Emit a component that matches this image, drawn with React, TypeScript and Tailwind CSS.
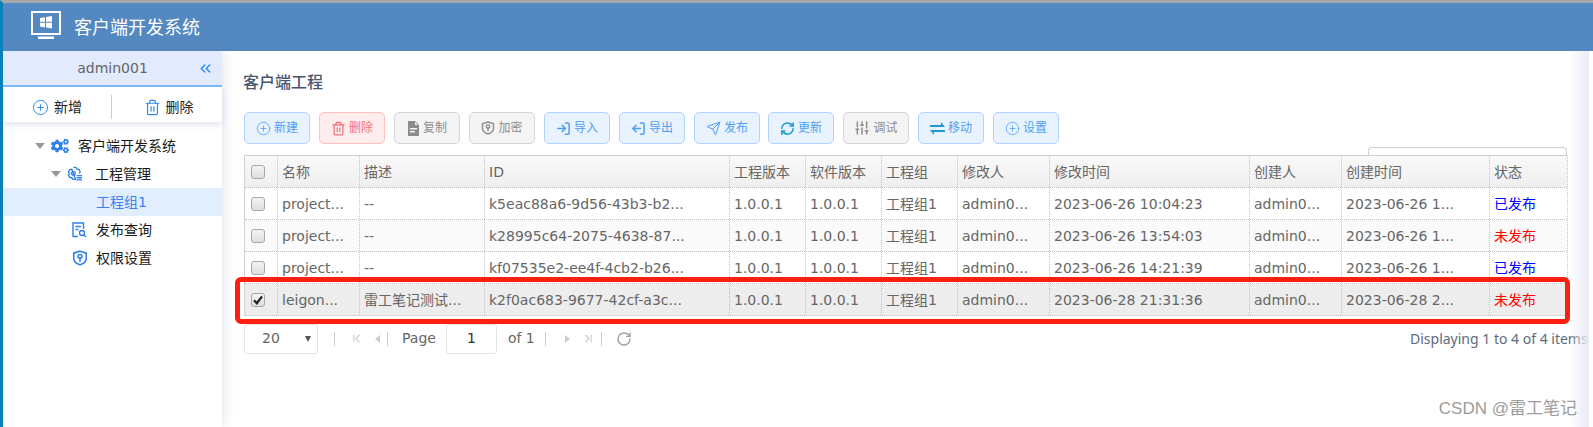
import type { ReactNode } from 'react';
import {
  ChevronsLeft,
  ChevronFirst,
  ChevronLast,
  CirclePlus,
  LogIn,
  LogOut,
  RefreshCw,
  RotateCw,
  Send,
  SlidersVertical,
  Trash2,
} from 'lucide-react';
import { FaCogs } from 'react-icons/fa';

const UI_FONT = "font-['DejaVu_Sans','Noto_Sans_CJK_SC',sans-serif]";

type Tone = 'blue' | 'red' | 'gray';

const toneClass: Record<Tone, string> = {
  blue: 'bg-[#e9f3ff] border-[#aed4ff] text-[#4d9ff5]',
  red: 'bg-[#ffecec] border-[#ffc0c0] text-[#f4717a]',
  gray: 'bg-[#f4f4f4] border-[#d6d6d6] text-[#8c8c8c]',
};

function MonitorLogo() {
  return (
    <svg width="31" height="28" viewBox="0 0 31 28" className="-mt-[4px] shrink-0">
      <rect x="1" y="1" width="28" height="22" fill="none" stroke="#fff" strokeWidth="2" />
      <path d="M9 7l5-.8v4.600H9zM15 6l6-.9v5.700h-6zM9 11.800h5v4.600l-5-.8zM15 11.800h6v5.700l-6-.9z" fill="#fff" />
      <rect x="7" y="25.500" width="16" height="2.500" fill="#fff" />
    </svg>
  );
}

function CopyIcon() {
  return (
    <svg width="13" height="15" viewBox="0 0 13 15" fill="#8c8c8c">
      <path d="M1 0h7l4 4v11H1zM3 7v1.500h7V7zM3 10v1.500h5V10zM8 1v3h3z" fillRule="evenodd" />
    </svg>
  );
}

function ShieldKey({ size = 14, color = '#8c8c8c' }: { size?: number; color?: string }) {
  return (
    <svg width={size} height={size} viewBox="0 0 14 14" fill="none" stroke={color} strokeWidth="1.400">
      <path d="M7 1l5.500 1.800v4.400c0 3-2.500 4.800-5.500 5.800-3-1-5.500-2.800-5.500-5.800V2.800z" />
      <circle cx="7" cy="5.600" r="1.700" />
      <path d="M7 7.300v3" />
    </svg>
  );
}

function SwapIcon() {
  return (
    <svg width="15" height="13" viewBox="0 0 15 13" fill="#1b9ad6">
      <path d="M0 3h11V0l4 5H0zM15 8H0l4 5v-3h11z" />
    </svg>
  );
}

function ProjectGear() {
  return (
    <svg width="16" height="16" viewBox="0 0 15 15" fill="none" stroke="#2f80ed" strokeWidth="1.300">
      <path d="M6 1l2.500.5 1 1.500 2 .3.800 2.200-.8 1.500M8 12.500H5.500l-1-1.500-2-.3L1.300 8.500l1-1.500-1-1.500 1.200-2.200 2-.3z" />
      <circle cx="6" cy="7" r="1.700" />
      <path d="M9 9h5M9 11h5M9 13h5" />
    </svg>
  );
}

function FileQuery() {
  return (
    <svg width="15" height="16" viewBox="0 0 15 16" fill="none" stroke="#2f80ed" strokeWidth="1.400">
      <path d="M6 14.500H1V1h10.500v6" />
      <path d="M3.500 4.500h5.500M3.500 7.500h3" />
      <circle cx="10" cy="11" r="2.500" />
      <path d="M12 13l2 2" />
    </svg>
  );
}

function ToolButton({
  tone,
  icon,
  label,
  className = '',
}: {
  tone: Tone;
  icon: ReactNode;
  label: string;
  className?: string;
}) {
  return (
    <div
      className={`flex h-[32px] w-[66px] items-center justify-center gap-[3px] rounded-[5px] border text-[12px] ${toneClass[tone]} ${className}`}
    >
      {icon}
      <span>{label}</span>
    </div>
  );
}

function TreeRow({
  indent,
  iconWidth = 'w-[24px]',
  caret,
  icon,
  label,
  active,
}: {
  indent: string;
  iconWidth?: string;
  caret?: boolean;
  icon?: ReactNode;
  label: string;
  active?: boolean;
}) {
  return (
    <div
      className={`flex h-[28px] items-center text-[14px] ${indent} ${active ? 'bg-[#e1eeff] text-[#3f7ff0]' : 'text-[#1a1a1a]'}`}
    >
      <span className="flex w-[16px] shrink-0 items-center">
        {caret && <span className="h-0 w-0 border-x-[5px] border-t-[6px] border-x-transparent border-t-[#999]" />}
      </span>
      <span className={`flex shrink-0 items-center ${iconWidth}`}>{icon}</span>
      <span>{label}</span>
    </div>
  );
}

function Checkbox({ checked }: { checked?: boolean }) {
  return (
    <span className="flex h-[14px] w-[14px] items-center justify-center rounded-[3px] border border-[#a8a8a8] bg-gradient-to-b from-[#f4f4f4] to-[#dedede]">
      {checked && (
        <svg width="10" height="10" viewBox="0 0 10 10">
          <path d="M1 5.200l2.800 3L9 1.500" fill="none" stroke="#222" strokeWidth="2.200" />
        </svg>
      )}
    </span>
  );
}

const GRID = 'grid grid-cols-[33px_82px_125px_245px_76px_76px_76px_92px_200px_92px_148px_78px]';

const columns = ['名称', '描述', 'ID', '工程版本', '软件版本', '工程组', '修改人', '修改时间', '创建人', '创建时间', '状态'];

const rows = [
  { cells: ['project...', '--', 'k5eac88a6-9d56-43b3-b2...', '1.0.0.1', '1.0.0.1', '工程组1', 'admin0...', '2023-06-26 10:04:23', 'admin0...', '2023-06-26 1...'], status: '已发布', bg: 'bg-white' },
  { cells: ['project...', '--', 'k28995c64-2075-4638-87...', '1.0.0.1', '1.0.0.1', '工程组1', 'admin0...', '2023-06-26 13:54:03', 'admin0...', '2023-06-26 1...'], status: '未发布', bg: 'bg-[#fafafa]' },
  { cells: ['project...', '--', 'kf07535e2-ee4f-4cb2-b26...', '1.0.0.1', '1.0.0.1', '工程组1', 'admin0...', '2023-06-26 14:21:39', 'admin0...', '2023-06-26 1...'], status: '已发布', bg: 'bg-white' },
  { cells: ['leigon...', '雷工笔记测试...', 'k2f0ac683-9677-42cf-a3c...', '1.0.0.1', '1.0.0.1', '工程组1', 'admin0...', '2023-06-28 21:31:36', 'admin0...', '2023-06-28 2...'], status: '未发布', bg: 'bg-[#ededed]', checked: true },
];

const CELL = 'flex items-center overflow-hidden whitespace-nowrap border-r border-dotted border-[#c4c4c4] pl-[4px] pt-[1px]';
const CHECK_CELL = 'flex items-center border-r border-dotted border-[#c4c4c4] pl-[6px]';

export default function App() {
  return (
    <div className={`relative h-[427px] w-[1593px] overflow-hidden border-l-[3px] border-t-[3px] border-l-[#0b7fb8] border-t-[#a8a8a8] bg-white ${UI_FONT}`}>
      <header className="flex h-[48px] items-center gap-[12px] bg-[#5388c0] pl-[28px] text-[18px] text-white">
        <MonitorLogo />
        <span>客户端开发系统</span>
      </header>

      <div className="flex h-[376px]">
        <aside className="relative z-10 w-[219px] shrink-0 bg-white shadow-[3px_0_10px_rgba(120,135,190,0.18)]">
          <div className="relative flex h-[36px] items-center justify-center border-b-2 border-[#7cb8f8] bg-[#e1ebfd] text-[14px] text-[#666]">
            admin001
            <ChevronsLeft size={17} strokeWidth={2} className="absolute right-[8px] text-[#2d8cf0]" />
          </div>
          <div className="flex h-[35px] items-center pt-[5px] text-[14px] text-[#222] shadow-[0_3px_6px_rgba(90,100,150,0.16)]">
            <div className="flex h-[24px] w-[109px] items-center justify-center gap-[5px] border-r border-[#ccc]">
              <CirclePlus size={17} strokeWidth={1.4} className="text-[#2d8cf0]" />
              新增
            </div>
            <div className="flex flex-1 items-center justify-center gap-[5px] pl-[3px]">
              <Trash2 size={17} strokeWidth={1.7} className="text-[#2d8cf0]" />
              删除
            </div>
          </div>
          <div className="mt-[10px]">
            <TreeRow indent="pl-[32px]" iconWidth="w-[27px]" caret icon={<FaCogs size={18} color="#2f80ed" />} label="客户端开发系统" />
            <TreeRow indent="pl-[48px]" iconWidth="w-[28px]" caret icon={<ProjectGear />} label="工程管理" />
            <TreeRow indent="pl-[53px]" active icon={null} label="工程组1" />
            <TreeRow indent="pl-[53px]" icon={<FileQuery />} label="发布查询" />
            <TreeRow indent="pl-[53px]" icon={<ShieldKey size={16} color="#2f80ed" />} label="权限设置" />
          </div>
        </aside>

        <main className="w-[1367px] shrink-0 overflow-hidden pl-[22px]">
          <h1 className="-ml-px mt-[21px] h-[22px] text-[16px] font-medium leading-[22px] text-[#46566f]">客户端工程</h1>

          <div className="mt-[18px] flex gap-[9px]">
            <ToolButton tone="blue" icon={<CirclePlus size={15} strokeWidth={1.3} />} label="新建" />
            <ToolButton tone="red" icon={<Trash2 size={15} strokeWidth={2} />} label="删除" />
            <ToolButton tone="gray" icon={<CopyIcon />} label="复制" />
            <ToolButton tone="gray" icon={<ShieldKey />} label="加密" />
            <ToolButton tone="blue" icon={<LogIn size={15} strokeWidth={2.4} />} label="导入" />
            <ToolButton tone="blue" icon={<LogOut size={15} strokeWidth={2.4} className="-scale-x-100" />} label="导出" />
            <ToolButton tone="blue" icon={<Send size={15} strokeWidth={1.6} />} label="发布" />
            <ToolButton tone="blue" className="-ml-px" icon={<RefreshCw size={15} strokeWidth={2.4} className="text-[#1b9ad6]" />} label="更新" />
            <ToolButton tone="gray" icon={<SlidersVertical size={16} strokeWidth={2.2} />} label="调试" />
            <ToolButton tone="blue" icon={<SwapIcon />} label="移动" />
            <ToolButton tone="blue" icon={<CirclePlus size={15} strokeWidth={1.3} />} label="设置" />
          </div>

          <div className="relative mt-[11px] w-[1323px] border-l border-t border-[#cfcfcf] text-[14px] text-[#666]">
            {/* stub of the search box poking out above the table */}
            <div className="absolute -top-[9px] right-0 h-[8px] w-[199px] rounded-t-[4px] border-x border-t border-[#cfcfcf]" />

            <div className={`${GRID} h-[32px] border-b border-dotted border-[#c4c4c4] bg-gradient-to-b from-[#f9f9f9] to-[#efefef]`}>
              <div className={CHECK_CELL}>
                <Checkbox />
              </div>
              {columns.map((c) => (
                <div key={c} className={CELL}>
                  {c}
                </div>
              ))}
            </div>

            {rows.map((r) => (
              <div key={r.cells[2]} className={`${GRID} h-[32px] border-b border-dotted border-[#c4c4c4] ${r.bg}`}>
                <div className={CHECK_CELL}>
                  <Checkbox checked={r.checked} />
                </div>
                {r.cells.map((c, i) => (
                  <div key={i} className={CELL}>
                    {c}
                  </div>
                ))}
                <div className={`${CELL} ${r.status === '已发布' ? 'text-[#0000ff]' : 'text-[#ff0000]'}`}>{r.status}</div>
              </div>
            ))}

            {/* red annotation drawn on top of the screenshot */}
            <div className="pointer-events-none absolute -left-[10px] top-[121px] h-[47px] w-[1335px] rounded-[6px] border-[5px] border-[#ff1f10]" />
          </div>

          <div className="mt-[7px] flex h-[31px] items-center whitespace-nowrap text-[14px] text-[#666]">
            <div className="flex w-[1166px] shrink-0 items-center">
              <div className="flex h-[30px] w-[74px] items-center justify-between rounded-[3px] border border-[#e4e4e4] pl-[17px] pr-[6px]">
                20
                <span className="h-0 w-0 border-x-[3.500px] border-t-[6px] border-x-transparent border-t-[#555]" />
              </div>
              <span className="ml-[16px] h-[14px] w-px bg-[#ccc]" />
              <ChevronFirst size={13} className="ml-[15px] text-[#ccc]" />
              <span className="ml-[12px] h-0 w-0 border-y-[4px] border-r-[5px] border-y-transparent border-r-[#ccc]" />
              <span className="ml-[7px] h-[14px] w-px bg-[#ccc]" />
              <span className="ml-[14px]">Page</span>
              <div className="ml-[10px] flex h-[30px] w-[51px] items-center justify-center rounded-[3px] border border-[#e4e4e4] text-[#333]">
                1
              </div>
              <span className="ml-[11px]">of 1</span>
              <span className="mx-[10px] h-[14px] w-px bg-[#ccc]" />
              <span className="ml-[9px] h-0 w-0 border-y-[4px] border-l-[5px] border-y-transparent border-l-[#ccc]" />
              <ChevronLast size={13} className="ml-[12px] text-[#ccc]" />
              <span className="ml-[6px] h-[14px] w-px bg-[#ccc]" />
              <RotateCw size={16} className="ml-[14px] text-[#9aa0ad]" />
            </div>
            <span className="shrink-0 font-['Noto_Sans',sans-serif] text-[#5d6b7e]">Displaying 1 to 4 of 4 items</span>
          </div>
        </main>
      </div>

      {/* right edge shadow */}
      <div className="pointer-events-none absolute bottom-0 left-[1567px] top-[48px] w-[19px] bg-gradient-to-r from-transparent to-[#e8ebf6]" />
      <span className="absolute bottom-[6px] right-[16px] font-['Liberation_Sans','Noto_Sans_CJK_SC',sans-serif] text-[17px] text-[#9c9c9c]">
        CSDN @雷工笔记
      </span>
    </div>
  );
}
